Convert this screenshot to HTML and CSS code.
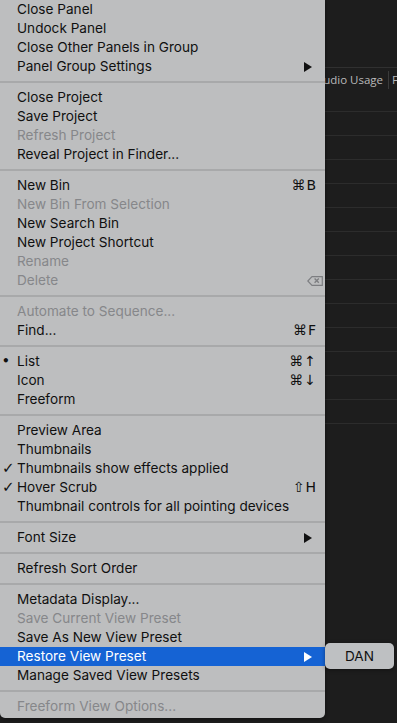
FILE: index.html
```html
<!DOCTYPE html>
<html lang="en">
<head>
    <meta charset="UTF-8" />
    <meta name="viewport" content="width=device-width, initial-scale=1.0" />
    <title>Project Panel Menu</title>
    <link rel="stylesheet" href="styles.css">
</head>
<body>
    <div class="panel">
        <div class="panel-top"></div>
        <div class="head">
            <span class="head-col">Audio Usage</span>
            <span class="head-col head-last">F</span>
        </div>
        <div class="row"></div>
        <div class="row"></div>
        <div class="row"></div>
        <div class="row"></div>
        <div class="row"></div>
        <div class="row"></div>
        <div class="row"></div>
        <div class="row"></div>
        <div class="row"></div>
        <div class="row"></div>
        <div class="row"></div>
        <div class="row"></div>
        <div class="row"></div>
        <div class="row"></div>
    </div>

    <div class="menu">
        <div class="item">Close Panel</div>
        <div class="item">Undock Panel</div>
        <div class="item">Close Other Panels in Group</div>
        <div class="item">Panel Group Settings <span class="arrow"></span></div>
        <div class="sep"></div>

        <div class="item">Close Project</div>
        <div class="item">Save Project</div>
        <div class="item disabled">Refresh Project</div>
        <div class="item">Reveal Project in Finder...</div>
        <div class="sep"></div>

        <div class="item">New Bin <span class="key">⌘B</span></div>
        <div class="item disabled">New Bin From Selection</div>
        <div class="item">New Search Bin</div>
        <div class="item">New Project Shortcut</div>
        <div class="item disabled">Rename</div>
        <div class="item disabled">Delete
            <svg class="del" width="16" height="10" viewBox="0 0 16 10">
                <path d="M5 0.7 H15.3 V9.3 H5 L0.8 5 Z" fill="none" stroke="#7d7e81" stroke-width="1.2" />
                <path d="M7.6 2.6 L11.8 6.8 M11.8 2.6 L7.6 6.8" stroke="#7d7e81" stroke-width="1.4" />
            </svg>
        </div>
        <div class="sep"></div>

        <div class="item disabled">Automate to Sequence...</div>
        <div class="item">Find... <span class="key">⌘F</span></div>
        <div class="sep"></div>

        <div class="item"><span class="mark dot">•</span>List <span class="key">⌘↑</span></div>
        <div class="item">Icon <span class="key">⌘↓</span></div>
        <div class="item">Freeform</div>
        <div class="sep"></div>

        <div class="item">Preview Area</div>
        <div class="item">Thumbnails</div>
        <div class="item"><span class="mark">✓</span>Thumbnails show effects applied</div>
        <div class="item"><span class="mark">✓</span>Hover Scrub <span class="key">⇧H</span></div>
        <div class="item">Thumbnail controls for all pointing devices</div>
        <div class="sep"></div>

        <div class="item">Font Size <span class="arrow"></span></div>
        <div class="sep"></div>

        <div class="item">Refresh Sort Order</div>
        <div class="sep"></div>

        <div class="item">Metadata Display...</div>
        <div class="item disabled">Save Current View Preset</div>
        <div class="item">Save As New View Preset</div>
        <div class="item active">Restore View Preset <span class="arrow"></span>
            <div class="submenu">DAN</div>
        </div>
        <div class="item">Manage Saved View Presets</div>
        <div class="sep"></div>

        <div class="item disabled">Freeform View Options...</div>
    </div>
</body>
</html>
```

FILE: styles.css
```css
body {
    margin: 0;
    padding: 0;
    background-color: #1d1d1d;
    font-family: 'Inter', 'DejaVu Sans', sans-serif;
    overflow: hidden;
    height: 723px;
}

/* dark project panel behind the menu */
.panel {
    width: 397px;
}

.panel-top {
    height: 67px;
}

.head {
    height: 21px;
    box-sizing: border-box;
    border-top: 1px solid #303030;
    display: flex;
    justify-content: flex-end;
    align-items: center;
    padding-top: 3px;
    font-family: 'Open Sans', sans-serif;
    font-size: 11.5px;
    color: #b9b9b9;
    white-space: nowrap;
}

.head-col {
    padding: 0 5px;
    line-height: 18px;
}

.head-last {
    border-left: 1px solid #3a3a3a;
    padding: 0 0 0 3px;
    width: 5px;
    overflow: hidden;
}

.row {
    height: 24px;
    box-sizing: border-box;
    border-bottom: 1px solid #2c2c2c;
}

/* context menu */
.menu {
    position: absolute;
    top: 0;
    left: 0;
    width: 325px;
    background-color: #bdbebf;
    border-radius: 0 0 5px 5px;
    padding-bottom: 2px;
    box-shadow: 0 1px 4px rgba(0, 0, 0, 0.45);
    font-size: 13.6px;
    color: #101010;
}

.item {
    position: relative;
    height: 19px;
    line-height: 19px;
    padding: 0 9px 0 17px;
    display: flex;
    justify-content: space-between;
    align-items: center;
    white-space: nowrap;
}

.item.disabled {
    color: #86878a;
}

.item.active {
    background-color: #1563d4;
    color: #ffffff;
}

.sep {
    height: 2px;
    margin: 5px 0;
    background-color: #a8a9aa;
}

.mark {
    position: absolute;
    left: 2px;
    top: 0;
    font-family: 'DejaVu Sans', sans-serif;
    font-size: 15px;
    font-weight: bold;
}

.mark.dot {
    left: 2px;
    font-size: 12px;
}

.key {
    font-family: 'DejaVu Sans', sans-serif;
    font-size: 14px;
    letter-spacing: 1px;
    margin-right: -1px;
}

.del {
    margin-right: -7px;
}

.arrow {
    width: 0;
    height: 0;
    margin-right: 4px;
    border-left: 8px solid #111;
    border-top: 5px solid transparent;
    border-bottom: 5px solid transparent;
}

.item.active .arrow {
    border-left-color: #ffffff;
}

.submenu {
    position: absolute;
    left: 100%;
    top: -4px;
    width: 69px;
    height: 26px;
    line-height: 26px;
    text-align: center;
    background-color: #bec0c2;
    border-radius: 5px;
    box-shadow: 0 1px 4px rgba(0, 0, 0, 0.4);
    color: #101010;
    font-size: 13.6px;
}
```
